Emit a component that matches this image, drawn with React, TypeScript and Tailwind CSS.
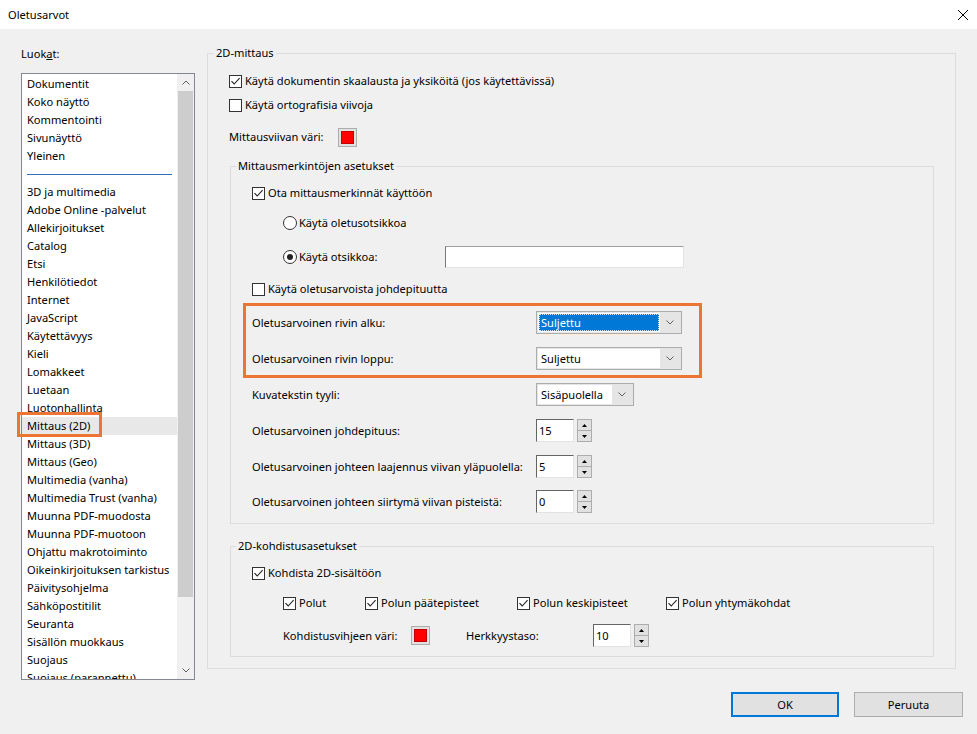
import React from "react";

const Check = ({ checked = false }: { checked?: boolean }) => (
  <span className="w-[13px] h-[13px] border border-[#333333] bg-white flex items-center justify-center shrink-0">
    {checked && (
      <svg width="11" height="11" viewBox="0 0 11 11">
        <path d="M1.5 5.2 L4.2 8 L9.6 2.2" fill="none" stroke="#222222" strokeWidth="1.1" />
      </svg>
    )}
  </span>
);

const Radio = ({ checked = false }: { checked?: boolean }) => (
  <span className="w-[14px] h-[14px] rounded-full border border-[#333333] bg-white flex items-center justify-center shrink-0">
    {checked && <span className="w-[6px] h-[6px] rounded-full bg-[#222222]" />}
  </span>
);

const Chevron = () => (
  <svg width="8" height="5" viewBox="0 0 8 5">
    <path d="M0.5 0.5 L4 4 L7.5 0.5" fill="none" stroke="#606060" strokeWidth="1" />
  </svg>
);

const Swatch = () => (
  <span className="w-[19px] h-[19px] border border-[#adadad] bg-[#e1e1e1] flex items-center justify-center shrink-0">
    <span className="w-[13px] h-[13px] bg-[#ff0000] border border-[#c40000]" />
  </span>
);

const Select = ({ value, width, focused = false }: { value: string; width: string; focused?: boolean }) => (
  <div className={`${width} h-[23px] border border-[#adadad] bg-[#e5e5e5] flex items-center p-[1px]`}>
    <div className="flex-1 h-full bg-white flex items-center p-[1px]">
      {focused ? (
        <div className="w-full h-full bg-[#0078d7] text-white border border-dotted border-[#c8dff5] flex items-center pl-[1px]">
          {value}
        </div>
      ) : (
        <div className="pl-[2px]">{value}</div>
      )}
    </div>
    <div className="w-[20px] flex items-center justify-center">
      <Chevron />
    </div>
  </div>
);

const Spin = ({ value }: { value: string }) => (
  <div className="flex items-center gap-[3px]">
    <div className="w-[38px] h-[23px] bg-white border border-t-[#646464] border-l-[#646464] border-r-[#e3e3e3] border-b-[#e3e3e3] flex items-center pl-[2px]">
      {value}
    </div>
    <div className="w-[15px] h-[23px] flex flex-col">
      <div className="h-[12px] border border-[#adadad] bg-[#e1e1e1] flex items-center justify-center">
        <svg width="5" height="3" viewBox="0 0 5 3">
          <path d="M0 3 L2.5 0 L5 3 Z" fill="#000000" />
        </svg>
      </div>
      <div className="h-[11px] border border-t-0 border-[#adadad] bg-[#e1e1e1] flex items-center justify-center">
        <svg width="5" height="3" viewBox="0 0 5 3">
          <path d="M0 0 L2.5 3 L5 0 Z" fill="#000000" />
        </svg>
      </div>
    </div>
  </div>
);

export default function App() {
  const top = ["Dokumentit", "Koko näyttö", "Kommentointi", "Sivunäyttö", "Yleinen"];
  const rest = [
    "3D ja multimedia",
    "Adobe Online -palvelut",
    "Allekirjoitukset",
    "Catalog",
    "Etsi",
    "Henkilötiedot",
    "Internet",
    "JavaScript",
    "Käytettävyys",
    "Kieli",
    "Lomakkeet",
    "Luetaan",
    "Luotonhallinta",
    "Mittaus (2D)",
    "Mittaus (3D)",
    "Mittaus (Geo)",
    "Multimedia (vanha)",
    "Multimedia Trust (vanha)",
    "Muunna PDF-muodosta",
    "Muunna PDF-muotoon",
    "Ohjattu makrotoiminto",
    "Oikeinkirjoituksen tarkistus",
    "Päivitysohjelma",
    "Sähköpostitilit",
    "Seuranta",
    "Sisällön muokkaus",
    "Suojaus",
    "Suojaus (parannettu)",
  ];

  return (
    <div className="w-[977px] h-[734px] flex flex-col bg-[#f0f0f0] font-['Noto_Sans',sans-serif] text-[11.1px] leading-[16px] text-black overflow-hidden whitespace-nowrap">
      {/* title bar */}
      <div className="h-[29px] shrink-0 bg-white flex items-center justify-between pl-[8px] pr-[9px]">
        <span>Oletusarvot</span>
        <svg width="10" height="10" viewBox="0 0 10 10">
          <path d="M0 0 L10 10 M10 0 L0 10" stroke="#000000" strokeWidth="1" />
        </svg>
      </div>

      <div className="flex items-start pl-[21px] shrink-0">
        {/* categories */}
        <div className="w-[174px] pt-[17px] flex flex-col">
          <div className="h-[16px]">
            Luok<span className="underline">a</span>t:
          </div>
          <div className="relative mt-[11px] h-[607px] border border-[#828790] bg-white flex">
            <div className="flex-1 overflow-hidden flex flex-col pt-[1px]">
              {top.map((t) => (
                <div key={t} className="h-[18px] leading-[18px] pl-[5px] shrink-0">
                  {t}
                </div>
              ))}
              <div className="h-[18px] pt-[9px] shrink-0">
                <div className="ml-[5px] w-[145px] h-[1px] bg-[#2f6fb5]" />
              </div>
              {rest.map((t) => (
                <div
                  key={t}
                  className={`h-[18px] leading-[18px] pl-[5px] shrink-0 ${
                    t === "Mittaus (2D)" ? "bg-[#e8e8e8]" : ""
                  }`}
                >
                  {t}
                </div>
              ))}
            </div>
            {/* scrollbar */}
            <div className="w-[17px] flex flex-col bg-[#f0f0f0]">
              <div className="h-[17px] flex items-center justify-center">
                <svg width="8" height="5" viewBox="0 0 8 5">
                  <path d="M0.5 4.5 L4 1 L7.5 4.5" fill="none" stroke="#606060" strokeWidth="1" />
                </svg>
              </div>
              <div className="h-[506px] mx-[1px] bg-[#cdcdcd]" />
              <div className="flex-1" />
              <div className="h-[17px] flex items-center justify-center">
                <Chevron />
              </div>
            </div>
            {/* annotation */}
            <div className="absolute left-[-5px] top-[338px] w-[85px] h-[25px] border-[3px] border-[#ec7533]" />
          </div>
        </div>

        {/* 2D-mittaus */}
        <fieldset className="ml-[12px] mt-[16px] w-[749px] h-[624px] border border-[#dcdcdc] pl-[21px] pr-[21px]">
          <legend className="-ml-[15px] px-[2px] leading-[16px]">2D-mittaus</legend>
          <div className="mt-[8px] h-[24px] flex items-center gap-[3px]">
            <Check checked />
            <span>Käytä dokumentin skaalausta ja yksiköitä (jos käytettävissä)</span>
          </div>
          <div className="h-[24px] flex items-center gap-[3px]">
            <Check />
            <span>Käytä ortografisia viivoja</span>
          </div>
          <div className="mt-[8px] h-[24px] flex items-center">
            <span className="w-[109px]">Mittausviivan väri:</span>
            <Swatch />
          </div>

          {/* Mittausmerkintöjen asetukset */}
          <fieldset className="mt-[9px] ml-[1px] w-[704px] h-[366px] border border-[#dcdcdc] pl-[21px]">
            <legend className="-ml-[16px] px-[2px] leading-[16px]">Mittausmerkintöjen asetukset</legend>
            <div className="mt-[7px] h-[24px] flex items-center gap-[3px]">
              <Check checked />
              <span>Ota mittausmerkinnät käyttöön</span>
            </div>
            <div className="mt-[6px] h-[24px] pl-[31px] flex items-center gap-[2px]">
              <Radio />
              <span>Käytä oletusotsikkoa</span>
            </div>
            <div className="mt-[10px] h-[24px] pl-[31px] flex items-center">
              <div className="w-[162px] flex items-center gap-[2px]">
                <Radio checked />
                <span>Käytä otsikkoa:</span>
              </div>
              <div className="w-[239px] h-[22px] bg-white border border-t-[#a0a0a0] border-l-[#7a7a7a] border-r-[#e3e3e3] border-b-[#e3e3e3]" />
            </div>
            <div className="mt-[8px] h-[24px] flex items-center gap-[3px]">
              <Check />
              <span>Käytä oletusarvoista johdepituutta</span>
            </div>

            <div className="mt-[2px] -ml-[9px] w-[459px] border-[3px] border-[#ec7533] pl-[6px] pt-[5px] pb-[5px]">
              <div className="h-[23px] flex items-center">
                <span className="w-[284px]">Oletusarvoinen rivin alku:</span>
                <Select value="Suljettu" width="w-[146px]" focused />
              </div>
              <div className="mt-[13px] h-[23px] flex items-center">
                <span className="w-[284px]">Oletusarvoinen rivin loppu:</span>
                <Select value="Suljettu" width="w-[146px]" />
              </div>
            </div>

            <div className="mt-[5px] h-[23px] flex items-center">
              <span className="w-[284px]">Kuvatekstin tyyli:</span>
              <Select value="Sisäpuolella" width="w-[98px]" />
            </div>
            <div className="mt-[13px] h-[23px] flex items-center">
              <span className="w-[284px]">Oletusarvoinen johdepituus:</span>
              <Spin value="15" />
            </div>
            <div className="mt-[13px] h-[23px] flex items-center">
              <span className="w-[284px]">Oletusarvoinen johteen laajennus viivan yläpuolella:</span>
              <Spin value="5" />
            </div>
            <div className="mt-[12px] h-[23px] flex items-center">
              <span className="w-[284px]">Oletusarvoinen johteen siirtymä viivan pisteistä:</span>
              <Spin value="0" />
            </div>
          </fieldset>

          {/* 2D-kohdistusasetukset */}
          <fieldset className="mt-[14px] ml-[1px] w-[704px] h-[119px] border border-[#dcdcdc] pl-[21px]">
            <legend className="-ml-[16px] px-[2px] leading-[16px]">2D-kohdistusasetukset</legend>
            <div className="mt-[7px] h-[24px] flex items-center gap-[3px]">
              <Check checked />
              <span>Kohdista 2D-sisältöön</span>
            </div>
            <div className="mt-[6px] h-[24px] pl-[31px] flex items-center">
              <div className="w-[82px] flex items-center gap-[3px]">
                <Check checked />
                <span>Polut</span>
              </div>
              <div className="w-[152px] flex items-center gap-[3px]">
                <Check checked />
                <span>Polun päätepisteet</span>
              </div>
              <div className="w-[149px] flex items-center gap-[3px]">
                <Check checked />
                <span>Polun keskipisteet</span>
              </div>
              <div className="flex items-center gap-[3px]">
                <Check checked />
                <span>Polun yhtymäkohdat</span>
              </div>
            </div>
            <div className="mt-[9px] h-[23px] pl-[31px] flex items-center">
              <span className="w-[128px]">Kohdistusvihjeen väri:</span>
              <Swatch />
              <span className="ml-[36px] w-[127px]">Herkkyystaso:</span>
              <Spin value="10" />
            </div>
          </fieldset>
        </fieldset>
      </div>

      {/* buttons */}
      <div className="mt-[12px] flex justify-end gap-[15px] pr-[14px]">
        <button className="w-[108px] h-[25px] border-2 border-[#0078d7] bg-[#e1e1e1]">OK</button>
        <button className="w-[109px] h-[25px] border border-[#adadad] bg-[#e1e1e1]">Peruuta</button>
      </div>
    </div>
  );
}
